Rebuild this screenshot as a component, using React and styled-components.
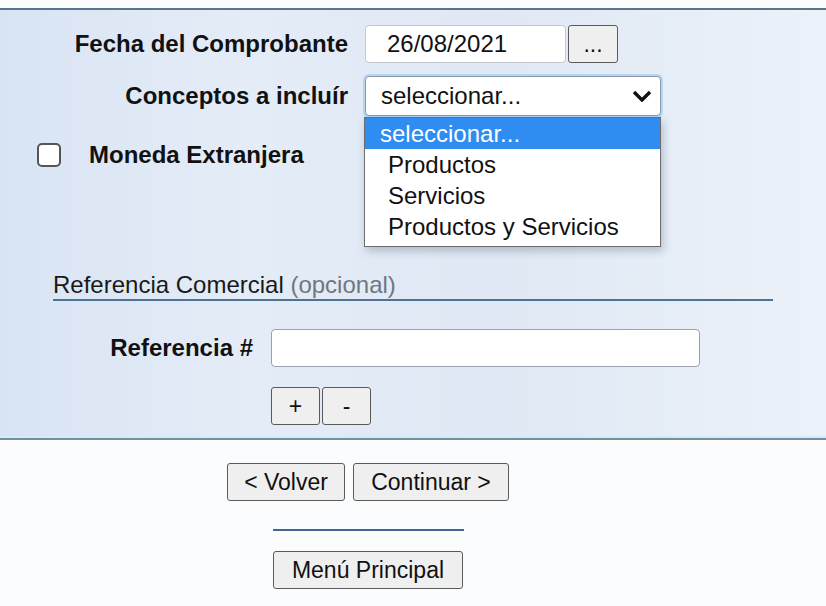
import React from "react";
import styled, { createGlobalStyle } from "styled-components";

const GlobalStyle = createGlobalStyle`
  html, body {
    margin: 0;
    padding: 0;
    background: #fbfcfd;
    font-family: "Liberation Sans", Arial, sans-serif;
    color: #111;
  }
`;

const Page = styled.div`
  width: 826px;
  height: 606px;
  padding-top: 8px;
  box-sizing: border-box;
  overflow: hidden;
`;

const Panel = styled.div`
  position: relative;
  height: 432px;
  box-sizing: border-box;
  border-top: 2px solid #58758c;
  border-bottom: 2px solid #7d8c99;
  background: linear-gradient(90deg, #d9e4f3 0%, #e4ecf7 30%, #dfe8f4 60%, #ecf2f9 100%);
  box-shadow: inset 0 -2px 0 #cfeefc;
  padding-top: 15px;
`;

const FieldGrid = styled.div`
  display: grid;
  grid-template-columns: 348px auto;
  column-gap: 17px;
  row-gap: 13px;
  align-items: center;
`;

const Label = styled.label`
  font-size: 24px;
  font-weight: bold;
  text-align: right;
  white-space: nowrap;
`;

const Controls = styled.div`
  display: flex;
  align-items: center;
  gap: 2px;
  position: relative;
`;

const TextInput = styled.div`
  width: ${(p) => p.$w}px;
  height: ${(p) => p.$h || 38}px;
  box-sizing: border-box;
  background: #fff;
  border: 1px solid ${(p) => p.$border || "#b8bfc8"};
  border-radius: 4px;
  font-size: 24px;
  line-height: 36px;
  padding-left: 21px;
`;

const Button = styled.button`
  height: ${(p) => p.$h || 38}px;
  min-width: ${(p) => p.$w || 0}px;
  box-sizing: border-box;
  padding: 0 ${(p) => p.$pad ?? 14}px;
  background: #efefef;
  border: 1px solid #5a5a5a;
  border-radius: 3px;
  font-family: "Liberation Sans", Arial, sans-serif;
  font-size: 23px;
  color: #111;
`;

const Select = styled.div`
  width: 296px;
  height: 40px;
  box-sizing: border-box;
  background: #fff;
  border: 1px solid #8a97a6;
  border-radius: 4px;
  box-shadow: 0 0 0 2px rgba(150, 195, 240, 0.55);
  font-size: 24px;
  display: flex;
  align-items: center;
  justify-content: space-between;
  padding: 0 8px 0 15px;
`;

const Dropdown = styled.ul`
  position: absolute;
  top: 41px;
  left: -1px;
  width: 297px;
  margin: 0;
  padding: 0 0 4px;
  list-style: none;
  box-sizing: border-box;
  background: #fff;
  border: 1px solid #6c6c6c;
  box-shadow: 2px 4px 8px rgba(60, 80, 100, 0.3);
  z-index: 5;
`;

const Option = styled.li`
  height: 31px;
  line-height: 31px;
  font-size: 24px;
  padding-left: ${(p) => (p.$active ? 15 : 23)}px;
  background: ${(p) => (p.$active ? "#2f8cf0" : "transparent")};
  color: ${(p) => (p.$active ? "#fff" : "#111")};
`;

const CheckRow = styled.div`
  display: flex;
  align-items: center;
  gap: 28px;
  margin: 25px 0 0 37px;
`;

const Checkbox = styled.span`
  width: 24px;
  height: 24px;
  box-sizing: border-box;
  border: 2px solid #555;
  border-radius: 5px;
  background: #fff;
`;

const SectionTitle = styled.div`
  margin: 103px 53px 0;
  font-size: 24px;
  line-height: 26px;
  padding-bottom: 1px;
  border-bottom: 2px solid #4f7394;
  color: #1a1a1a;
`;

const Muted = styled.span`
  color: #6f7880;
`;

const RefGrid = styled(FieldGrid)`
  grid-template-columns: 253px auto;
  column-gap: 18px;
  row-gap: 20px;
  margin-top: 28px;
`;

const Footer = styled.div`
  display: flex;
  flex-direction: column;
  align-items: center;
  padding-right: 90px;
  padding-top: 23px;
`;

const ButtonRow = styled.div`
  display: flex;
  gap: 8px;
`;

const Divider = styled.div`
  width: 191px;
  height: 2px;
  background: #3f6791;
  margin: 28px 0 20px;
`;

const Chevron = () => (
  <svg width="20" height="12" viewBox="0 0 20 12">
    <polyline points="2,2 10,10 18,2" fill="none" stroke="#111" strokeWidth="3.4" />
  </svg>
);

export default function App() {
  return (
    <>
      <GlobalStyle />
      <Page>
        <Panel>
          <FieldGrid>
            <Label>Fecha del Comprobante</Label>
            <Controls>
              <TextInput $w={201} $border="#c3c9d0">26/08/2021</TextInput>
              <Button $w={50} $pad={0}>...</Button>
            </Controls>
            <Label>Conceptos a incluír</Label>
            <Controls>
              <Select>
                <span>seleccionar...</span>
                <Chevron />
              </Select>
              <Dropdown>
                <Option $active>seleccionar...</Option>
                <Option>Productos</Option>
                <Option>Servicios</Option>
                <Option>Productos y Servicios</Option>
              </Dropdown>
            </Controls>
          </FieldGrid>
          <CheckRow>
            <Checkbox />
            <Label>Moneda Extranjera</Label>
          </CheckRow>
          <SectionTitle>
            Referencia Comercial <Muted>(opcional)</Muted>
          </SectionTitle>
          <RefGrid>
            <Label>Referencia #</Label>
            <Controls>
              <TextInput $w={429} $border="#9aa3ad" />
            </Controls>
            <span />
            <Controls>
              <Button $w={49} $pad={0}>+</Button>
              <Button $w={49} $pad={0}>-</Button>
            </Controls>
          </RefGrid>
        </Panel>
        <Footer>
          <ButtonRow>
            <Button $w={118}>&lt; Volver</Button>
            <Button $w={156}>Continuar &gt;</Button>
          </ButtonRow>
          <Divider />
          <Button $w={190}>Menú Principal</Button>
        </Footer>
      </Page>
    </>
  );
}
